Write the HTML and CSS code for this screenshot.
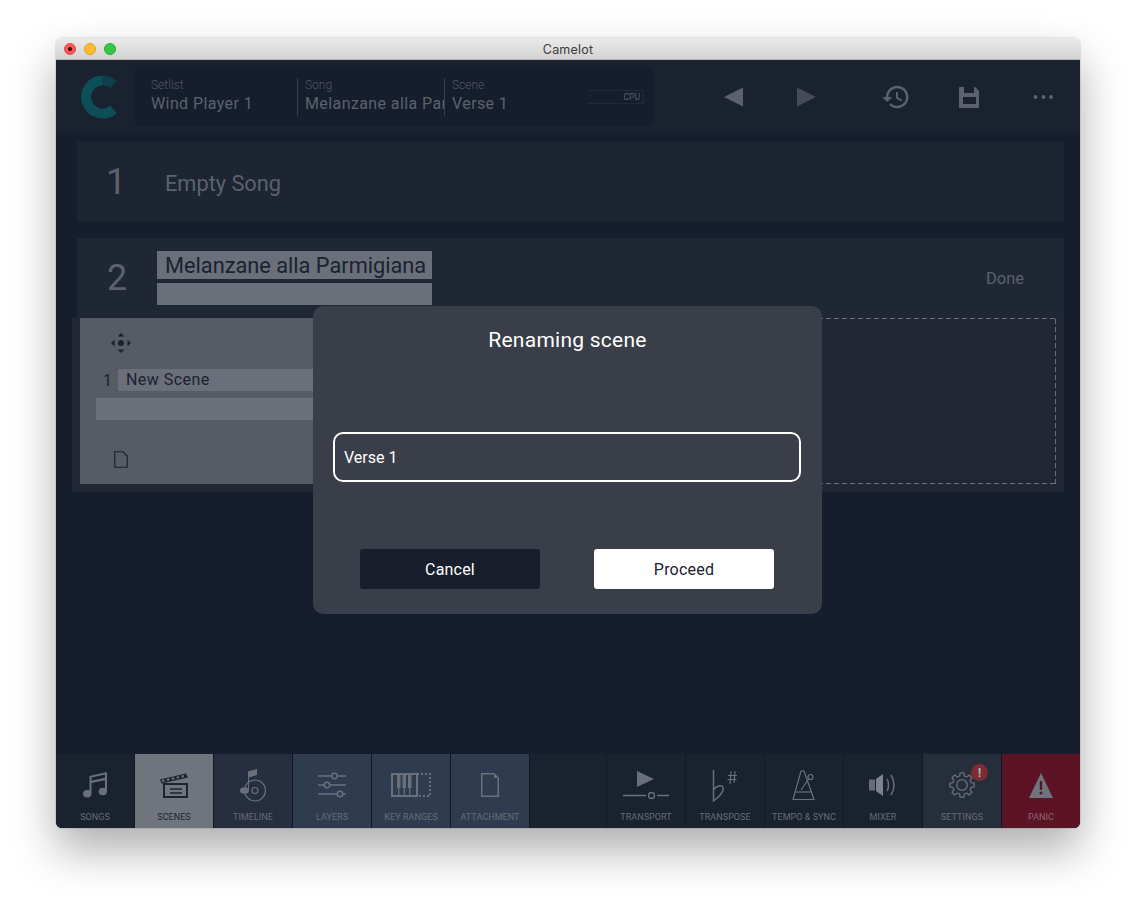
FILE: index.html
```html
<!DOCTYPE html>
<html lang="en">
<head>
<meta charset="utf-8">
<title>Camelot</title>
<link rel="stylesheet" href="styles.css">
</head>
<body>
<div class="window">
  <header class="titlebar">
    <div class="lights"><span class="light red"></span><span class="light yellow"></span><span class="light green"></span></div>
    <div class="title">Camelot</div>
  </header>
  <div class="app">
    <div class="topbar">
      <div class="logo">
        <svg width="40" height="44" viewBox="0 0 40 44"><path d="M23.700 5.500A16.500 16.500 0 1 0 34.500 34.500" fill="none" stroke="#0c4f58" stroke-width="10"/><path d="M23.700 5.500A16.500 16.500 0 0 1 34.500 9.500" fill="none" stroke="#0f3f4b" stroke-width="10"/></svg>
      </div>
      <div class="selector">
        <div class="sel-item sel-setlist"><span class="sel-label">Setlist</span><span class="sel-value">Wind Player 1</span></div>
        <div class="sel-item sel-song"><span class="sel-label">Song</span><span class="sel-value">Melanzane alla Parmigiana</span></div>
        <div class="sel-item sel-scene"><span class="sel-label">Scene</span><span class="sel-value">Verse 1</span></div>
        <div class="cpu"><span>CPU</span></div>
      </div>
      <div class="top-actions">
        <svg class="act act-prev" width="20" height="20" viewBox="0 0 20 20"><path d="M0 10 19 0.500V19.500Z" fill="#5c626d"/></svg>
        <svg class="act act-next" width="20" height="20" viewBox="0 0 20 20"><path d="M20 10 1 0.500V19.500Z" fill="#454b57"/></svg>
        <svg class="act act-hist" width="30" height="30" viewBox="0 0 24 24"><path fill="#5c626d" d="M13 3c-4.970 0-9 4.030-9 9H1l3.890 3.890.07.140L9 12H6c0-3.870 3.130-7 7-7s7 3.130 7 7-3.130 7-7 7c-1.930 0-3.680-.790-4.940-2.060l-1.420 1.420C8.270 19.990 10.510 21 13 21c4.970 0 9-4.030 9-9s-4.030-9-9-9zm-1 5v5l4.280 2.540.720-1.210-3.500-2.080V8H12z"/></svg>
        <svg class="act act-save" width="20" height="21" viewBox="0 0 20 21"><path fill="#5c626d" fill-rule="evenodd" d="M1 0H5V6H15V0H16L20 4V20a1 1 0 0 1-1 1H1a1 1 0 0 1-1-1V1a1 1 0 0 1 1-1ZM4 10V17H17V10Z"/></svg>
        <svg class="act act-more" width="20" height="6" viewBox="0 0 20 6"><circle cx="2.500" cy="3" r="2" fill="#5c626d"/><circle cx="10.500" cy="3" r="2" fill="#5c626d"/><circle cx="18" cy="3" r="2" fill="#5c626d"/></svg>
      </div>
    </div>

    <main class="content">
      <section class="song-row">
        <div class="song-num">1</div>
        <div class="song-name">Empty Song</div>
      </section>
      <section class="song-open">
        <div class="song-head">
          <div class="song-num song-num-open">2</div>
          <div class="song-fields">
            <div class="field-name">Melanzane alla Parmigiana</div>
            <div class="field-sub"></div>
          </div>
          <div class="done">Done</div>
        </div>
        <div class="scenes">
          <div class="scene-card">
            <svg class="move" width="20" height="20" viewBox="0 0 20 20"><g fill="#1b2230"><path d="M10 0 13.500 3.500H6.500Z"/><path d="M10 20 13.500 16.500H6.500Z"/><path d="M0 10 3.500 6.500V13.500Z"/><path d="M20 10 16.500 6.500V13.500Z"/><circle cx="10" cy="10" r="3"/></g></svg>
            <div class="scene-line"><span class="scene-idx">1</span><span class="scene-name">New Scene</span></div>
            <div class="scene-sub"></div>
            <svg class="doc" width="14" height="17" viewBox="0 0 14 17"><path d="M.750.750H9L13.250 5V16.250H.750Z" fill="none" stroke="#1b2230" stroke-width="1.200"/></svg>
          </div>
          <div class="scene-drop"></div>
        </div>
      </section>
    </main>

    <nav class="tabbar">
      <div class="tab tab-dark">
        <svg class="ticon ic-songs" width="24" height="26" viewBox="0 0 24 26"><g fill="#6a707a"><ellipse cx="4.200" cy="21.800" rx="4.200" ry="3.800"/><ellipse cx="19.800" cy="19.500" rx="4.200" ry="3.800"/><path d="M6.500 21V4L24 0V19.500H22V8.200L8.500 11V21.500Z"/></g><path d="M8.500 5.600 22 2.600V5.800L8.500 8.700Z" fill="#1a2230"/></svg>
        <span class="tlabel">Songs</span>
      </div>
      <div class="tab tab-active">
        <svg class="ticon ic-scenes" width="28" height="26" viewBox="0 0 28 26"><path d="M0 7.500 26 1.500 28 5.500 1.500 11.500Z" fill="#1e2431"/><path d="M2 9 26.500 3.400" stroke="#6f747d" stroke-width="2" stroke-dasharray="2.500 2.500" fill="none"/><rect x="4" y="12" width="23" height="13" fill="none" stroke="#1e2431" stroke-width="2"/><path d="M10 17H22M10 21H22" stroke="#1e2431" stroke-width="1.600"/></svg>
        <span class="tlabel">Scenes</span>
      </div>
      <div class="tab tab-time">
        <svg class="ticon ic-time" width="30" height="33" viewBox="0 0 30 33"><g fill="none" stroke="#6a707a" stroke-width="1.200"><circle cx="17" cy="21.500" r="10.500"/><circle cx="17" cy="21.500" r="3"/></g><ellipse cx="6.500" cy="21.500" rx="4.500" ry="3.300" fill="#6a707a"/><path d="M10 22V2.500L19 0V6L11 8.500V22Z" fill="#6a707a"/></svg>
        <span class="tlabel">Timeline</span>
      </div>
      <div class="tab tab-blue">
        <svg class="ticon ic-layers" width="30" height="30" viewBox="0 0 30 30"><g stroke="#6a707a" stroke-width="1.500" fill="#2f3c50"><path d="M1 6H29M1 15H29M1 24H29"/><circle cx="17.500" cy="6" r="2.700"/><circle cx="10" cy="15" r="2.700"/><circle cx="23" cy="24" r="2.700"/></g></svg>
        <span class="tlabel">Layers</span>
      </div>
      <div class="tab tab-blue">
        <svg class="ticon ic-keys" width="40" height="24" viewBox="0 0 40 24"><path d="M1 1H26V23H1Z" fill="none" stroke="#6a707a" stroke-width="2"/><path d="M26 1H39V23H26" fill="none" stroke="#6a707a" stroke-width="2" stroke-dasharray="2 2"/><g fill="#6a707a"><rect x="6" y="1" width="3.500" height="14"/><rect x="11.500" y="1" width="3.500" height="14"/><rect x="17" y="1" width="3.500" height="14"/></g><path d="M7.750 15V23M13.250 15V23M18.750 15V23" stroke="#6a707a" stroke-width="1.200"/></svg>
        <span class="tlabel">Key Ranges</span>
      </div>
      <div class="tab tab-blue">
        <svg class="ticon ic-attach" width="18" height="24" viewBox="0 0 18 24"><path d="M.750.750H13L17.250 5V23.250H.750Z" fill="none" stroke="#6a707a" stroke-width="1.500"/><path d="M13 .750 17.250 5H13Z" fill="#6a707a"/></svg>
        <span class="tlabel">Attachment</span>
      </div>
      <div class="tab-gap"></div>
      <div class="tab tab-dark">
        <svg class="ticon" width="48" height="30" viewBox="0 0 48 30"><path d="M15 1 32 9 15 17Z" fill="#6a707a"/><path d="M1 25.500H24M35 25.500H47" stroke="#6a707a" stroke-width="1.500"/><circle cx="29.500" cy="25.500" r="3" fill="none" stroke="#6a707a" stroke-width="1.300"/></svg>
        <span class="tlabel">Transport</span>
      </div>
      <div class="tab tab-dark">
        <svg class="ticon" width="26" height="32" viewBox="0 0 26 32"><path d="M1.500 0V31C8 26 12 21 11 17.500 10 14.500 4 15.500 1.500 20" fill="none" stroke="#6a707a" stroke-width="1.500"/><path d="M19 1.500 18 14M23 1 22 13M16 5.500H25M15.500 9.500H24.500" stroke="#6a707a" stroke-width="1.200"/></svg>
        <span class="tlabel">Transpose</span>
      </div>
      <div class="tab tab-dark">
        <svg class="ticon" width="24" height="31" viewBox="0 0 24 31"><path d="M9 1H12L22 29.500H1Z" fill="none" stroke="#6a707a" stroke-width="1.200"/><path d="M3.500 22H20" stroke="#6a707a" stroke-width="1.200"/><path d="M9 20 18 7" stroke="#6a707a" stroke-width="1.200"/><circle cx="18.500" cy="7" r="2.500" fill="#1a2230" stroke="#6a707a" stroke-width="1.200"/></svg>
        <span class="tlabel">Tempo &amp; Sync</span>
      </div>
      <div class="tab tab-dark">
        <svg class="ticon ic-mixer" width="28" height="24" viewBox="0 0 28 24"><path d="M0 6.500H6V17.500H0Z" fill="#666c76"/><path d="M7 6 14 1V23L7 18Z" fill="#7d828b"/><path d="M18 6C20 9 20 15 18 18M22 2C26 8 26 16 22 22" fill="none" stroke="#6a707a" stroke-width="1.500"/></svg>
        <span class="tlabel">Mixer</span>
      </div>
      <div class="tab tab-settings">
        <svg class="ticon ic-gear" width="26" height="26" viewBox="-13 -13 26 26"><defs><path id="tooth" d="M8.980-2.410 12.150-1.920V1.920L8.980 2.410A9.300 9.300 0 0 1 8.050 4.650" fill="none" stroke="#6a707a" stroke-width="1.300" stroke-linejoin="round"/></defs><use href="#tooth"/><use href="#tooth" transform="rotate(45)"/><use href="#tooth" transform="rotate(90)"/><use href="#tooth" transform="rotate(135)"/><use href="#tooth" transform="rotate(180)"/><use href="#tooth" transform="rotate(225)"/><use href="#tooth" transform="rotate(270)"/><use href="#tooth" transform="rotate(315)"/><circle r="5.300" fill="none" stroke="#6a707a" stroke-width="1.300"/></svg>
        <span class="badge">!</span>
        <span class="tlabel">Settings</span>
      </div>
      <div class="tab tab-panic">
        <svg class="ticon ic-panic" width="24" height="25" viewBox="0 0 24 25"><path d="M12 0 24 25H0Z" fill="#6f747d"/><rect x="10.800" y="8" width="2.400" height="9" rx="1" fill="#5b1325"/><circle cx="12" cy="20" r="1.600" fill="#5b1325"/></svg>
        <span class="tlabel">Panic</span>
      </div>
    </nav>

    <div class="dialog">
      <h2 class="dialog-title">Renaming scene</h2>
      <div class="dialog-input">Verse 1</div>
      <div class="dialog-buttons">
        <button class="btn btn-cancel">Cancel</button>
        <button class="btn btn-proceed">Proceed</button>
      </div>
    </div>
  </div>
</div>
</body>
</html>
```
FILE: styles.css
```css
* { box-sizing: border-box; }
html, body { margin: 0; height: 902px; overflow: hidden; }
body { background: #fff; font-family: "Roboto", sans-serif; padding: 38px 56px 74px; }

.window {
  width: 1024px; height: 790px; display: flex; flex-direction: column;
  border-radius: 6px; overflow: hidden;
  box-shadow: 0 0 0 1px rgba(0,0,0,.08), 0 22px 45px rgba(0,0,0,.32);
}
.titlebar {
  height: 22px; flex: none; position: relative; display: flex; align-items: center; justify-content: center;
  background: linear-gradient(#ebebeb, #d2d2d2); border-bottom: 1px solid #b5b5b5; padding-top: 2px;
}
.lights { position: absolute; left: 8px; top: 5px; display: flex; gap: 8px; }
.light { width: 12px; height: 12px; border-radius: 50%; }
.red { background: radial-gradient(circle, #3b0a08 0 1.500px, #fc5753 2.500px); border: 1px solid #df4744; }
.yellow { background: #fdbc2e; border: 1px solid #de9f34; }
.green { background: #33c748; border: 1px solid #27aa35; }
.title { font-family: "Inter", sans-serif; font-size: 12.500px; color: #3c3c3c; letter-spacing: .2px; }

.app { flex: 1; display: flex; flex-direction: column; position: relative; background: #161d2c; min-height: 0; }

.topbar { height: 75px; flex: none; display: flex; background: #1a2230; padding-top: 8px; }
.logo { width: 79px; height: 58px; flex: none; display: flex; align-items: center; padding-left: 23px; }
.selector { width: 518px; height: 58px; flex: none; display: flex; background: #161d2c; padding-top: 10px; position: relative; }
.sel-item { display: flex; flex-direction: column; height: 38px; overflow: hidden; white-space: nowrap; padding-left: 7px; }
.sel-setlist { width: 162px; padding-left: 16px; }
.sel-song { width: 147px; border-left: 1px solid #3a404b; }
.sel-scene { width: 120px; border-left: 1px solid #3a404b; }
.sel-label { font-size: 12px; font-weight: 300; color: #535965; line-height: 14px; }
.sel-value { font-size: 16px; color: #5c626d; line-height: 22px; letter-spacing: .4px; margin-top: 1px; }
.cpu { position: absolute; left: 453px; top: 22px; width: 56px; height: 14px; border: 1px solid #222a38; border-left: 0; display: flex; justify-content: flex-end; align-items: center; padding-right: 3px; }
.cpu span { font-size: 8.500px; color: #5c626d; }

.top-actions { flex: 1; position: relative; }
.act { position: absolute; }
.act-prev { left: 71px; top: 19px; }
.act-next { left: 143px; top: 19px; }
.act-hist { left: 228px; top: 14px; }
.act-save { left: 306px; top: 19px; }
.act-more { left: 380px; top: 26px; }

.content { flex: 1; padding: 7px 16px 0; display: flex; flex-direction: column; gap: 16px; min-height: 0; }
.song-row { height: 80px; margin-left: 5px; display: flex; align-items: center; background: #1c2531; }
.song-num { width: 78px; margin-right: 10px; text-align: center; font-size: 36px; font-weight: 400; color: #5c626d; }
.song-name { font-size: 21.750px; color: #5c626d; padding-top: 2px; }

.song-open { display: flex; flex-direction: column; }
.song-head { margin-left: 5px; height: 80px; display: flex; background: #1f2734; position: relative; }
.song-num-open { width: 80px; margin-right: 0; padding-top: 19px; }
.song-fields { width: 275px; padding-top: 13px; display: flex; flex-direction: column; gap: 4px; }
.field-name { height: 28px; line-height: 30px; background: #6a6f79; color: #1b2230; font-size: 21.750px; padding-left: 8px; white-space: nowrap; }
.field-sub { height: 22px; background: #6a6f79; }
.done { position: absolute; right: 40px; top: 31px; font-size: 16.500px; color: #5c626d; }

.scenes { height: 174px; background: #212733; display: flex; padding: 0 8px 8px; }
.scene-card { width: 234px; height: 166px; flex: none; background: #575b63; position: relative; display: flex; flex-direction: column; }
.move { margin: 15px 0 0 31px; }
.scene-line { display: flex; align-items: center; height: 22px; margin-top: 16px; }
.scene-idx { width: 38px; padding-left: 23px; font-size: 16px; color: #1b2230; }
.scene-name { flex: 1; background: #6a6f79; height: 22px; line-height: 22px; font-size: 16px; color: #1b2230; padding-left: 8px; letter-spacing: .45px; }
.scene-sub { height: 22px; margin: 7px 0 0 16px; background: #6a6f79; }
.doc { margin: 31px 0 0 34px; }
.scene-drop {
  flex: 1; height: 166px;
  background-image:
    repeating-linear-gradient(90deg, #6a6f79 0 5px, transparent 5px 8px),
    repeating-linear-gradient(90deg, #6a6f79 0 5px, transparent 5px 8px),
    repeating-linear-gradient(0deg, #6a6f79 0 5px, transparent 5px 8px);
  background-size: 100% 1px, 100% 1px, 1px 100%;
  background-position: 0 0, 0 100%, 100% 0;
  background-repeat: no-repeat;
}

.tabbar { height: 74px; flex: none; display: flex; background: #111725; gap: 1px; }
.tab { width: 78px; flex: none; position: relative; display: flex; flex-direction: column; align-items: center; }
.tab-gap { width: 76px; flex: none; background: #1a2230; }
.ticon { position: absolute; left: 50%; top: 16px; transform: translateX(-50%); }
.ic-songs, .ic-scenes, .ic-gear, .ic-time { top: 18px; }
.ic-time { top: 15px; }
.ic-attach, .ic-keys, .ic-panic { top: 19px; }
.ic-mixer { top: 19px; }
.tlabel { position: absolute; left: 0; right: 0; top: 57px; text-align: center; font-size: 9px; line-height: 12px; text-transform: uppercase; color: #666c76; white-space: nowrap; letter-spacing: .05px; }
.tab-dark { background: #1a2230; }
.tab-active { background: #6f747d; }
.tab-active .tlabel { color: #1e2431; }
.tab-time { background: #272e3f; }
.tab-blue { background: #2f3c50; }
.tab-settings { background: #272e3b; }
.tab-panic { background: #5b1325; }
.tab-panic .tlabel { color: #8a6673; }
.badge { position: absolute; left: 48px; top: 10px; width: 17px; height: 17px; border-radius: 50%; background: #7c2c32; color: #a9adb3; font-size: 13px; font-weight: 700; line-height: 17px; text-align: center; }

.dialog { position: absolute; left: 257px; top: 246px; width: 509px; height: 308px; background: #393e49; border-radius: 10px; padding: 20px 20px 0; display: flex; flex-direction: column; }
.dialog-title { margin: 0; text-align: center; font-size: 21px; font-weight: 400; line-height: 28px; color: #fff; letter-spacing: .25px; }
.dialog-input { margin: 78px 1px 0 0; height: 50px; border: 2px solid #fff; border-radius: 10px; padding-left: 9px; line-height: 48px; font-size: 16px; color: #fff; }
.dialog-buttons { margin-top: 67px; padding: 0 27px; display: flex; gap: 54px; }
.btn { width: 180px; height: 40px; border: 0; border-radius: 3px; font: 400 16px "Roboto", sans-serif; letter-spacing: .2px; }
.btn-cancel { background: #181e2c; color: #fff; }
.btn-proceed { background: #fff; color: #1b2230; }
```
